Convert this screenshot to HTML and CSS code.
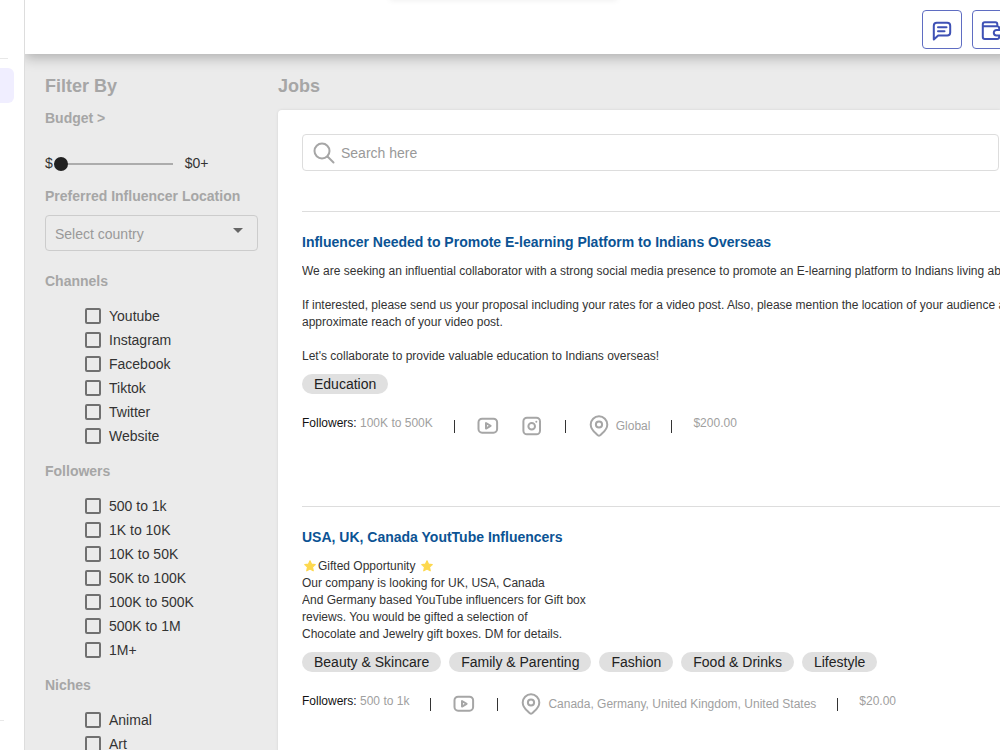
FILE: index.html
```html
<!DOCTYPE html>
<html lang="en">
<head>
    <meta charset="UTF-8">
    <meta name="viewport" content="width=device-width, initial-scale=1.0">
    <title>Jobs</title>
    <link rel="stylesheet" href="styles.css">
</head>
<body>
    <svg class="sprite" aria-hidden="true">
        <symbol id="icon-youtube" viewBox="0 0 24 24">
            <rect x="2.500" y="4.700" width="18.600" height="14" rx="3.600"/>
            <path d="M10 9v5.600l4.600-2.800z"/>
        </symbol>
        <symbol id="icon-instagram" viewBox="0 0 24 24">
            <rect x="3.400" y="3.700" width="16.600" height="16.600" rx="3.600"/>
            <circle cx="11.700" cy="12.200" r="3.300"/>
            <circle class="dot" cx="16.300" cy="7.700" r="1"/>
        </symbol>
        <symbol id="icon-pin" viewBox="0 0 24 24">
            <path d="M12 21.700c-1 0-1.700-.9-3-2.100C6.300 17.300 3.700 14.300 3.700 10.600a8.300 8.300 0 0 1 16.600 0c0 3.700-2.600 6.700-5.300 9-1.300 1.200-2 2.100-3 2.100z"/>
            <circle cx="12" cy="10.500" r="3.100"/>
        </symbol>
        <symbol id="icon-star" viewBox="0 0 24 24">
            <path d="M12 3l2.700 5.800 6.300.8-4.700 4.300 1.300 6.300-5.600-3.100-5.600 3.100 1.300-6.300L3 9.600l6.300-.8z"/>
        </symbol>
    </svg>

    <aside class="menu">
        <hr class="menu-line">
        <a class="menu-item active" href="#" aria-label="Jobs"></a>
        <hr class="menu-line short">
    </aside>

    <div class="page">
        <header class="topbar">
            <button class="icon-btn" aria-label="Messages">
                <svg viewBox="0 0 24 24">
                    <path d="M3.800 20.500V6.800a3 3 0 0 1 3-3h10.400a3 3 0 0 1 3 3v6.600a3 3 0 0 1-3 3H8.200z"/>
                    <path d="M8 8.200h8.500M8 12.200h6.500"/>
                </svg>
            </button>
            <button class="icon-btn" aria-label="Wallet">
                <svg viewBox="0 0 24 24">
                    <path d="M2.800 7.200V18a2 2 0 0 0 2 2h12.400a2 2 0 0 0 2-2v-1.500M2.800 7.200V5.300a2 2 0 0 1 2-2h10.500a2 2 0 0 1 2 2v1.900M2.800 7.200h14.400a2 2 0 0 1 2 2v1.500M22 11h-5.500a2.700 2.700 0 0 0 0 5.400H22z"/>
                </svg>
            </button>
        </header>

        <div class="content">
            <form class="filters">
                <h2>Filter By</h2>
                <h3><label for="budget">Budget &gt;</label></h3>
                <div class="budget">
                    <span>$</span>
                    <input type="range" id="budget" min="0" max="1000" value="0">
                    <output for="budget">$0+</output>
                </div>

                <h3><label for="country">Preferred Influencer Location</label></h3>
                <div class="select-box">
                    <select id="country">
                        <option>Select country</option>
                        <option>Canada</option>
                        <option>Germany</option>
                        <option>United Kingdom</option>
                        <option>United States</option>
                    </select>
                </div>

                <h3>Channels</h3>
                <div class="checks">
                    <label><input type="checkbox">Youtube</label>
                    <label><input type="checkbox">Instagram</label>
                    <label><input type="checkbox">Facebook</label>
                    <label><input type="checkbox">Tiktok</label>
                    <label><input type="checkbox">Twitter</label>
                    <label><input type="checkbox">Website</label>
                </div>

                <h3>Followers</h3>
                <div class="checks">
                    <label><input type="checkbox">500 to 1k</label>
                    <label><input type="checkbox">1K to 10K</label>
                    <label><input type="checkbox">10K to 50K</label>
                    <label><input type="checkbox">50K to 100K</label>
                    <label><input type="checkbox">100K to 500K</label>
                    <label><input type="checkbox">500K to 1M</label>
                    <label><input type="checkbox">1M+</label>
                </div>

                <h3>Niches</h3>
                <div class="checks">
                    <label><input type="checkbox">Animal</label>
                    <label><input type="checkbox">Art</label>
                </div>
            </form>

            <main class="jobs">
                <h2>Jobs</h2>
                <div class="panel">
                    <div class="search">
                        <svg viewBox="0 0 24 24"><circle cx="10" cy="10" r="7.500"/><path d="M15.500 15.500l6 6"/></svg>
                        <input type="text" placeholder="Search here" aria-label="Search jobs">
                    </div>

                    <article class="job">
                        <h4><a href="#">Influencer Needed to Promote E-learning Platform to Indians Overseas</a></h4>
                        <p>We are seeking an influential collaborator with a strong social media presence to promote an E-learning platform to Indians living abroad.<br>
                            <br>
                            If interested, please send us your proposal including your rates for a video post. Also, please mention the location of your audience and<br>
                            approximate reach of your video post.<br>
                            <br>
                            Let's collaborate to provide valuable education to Indians overseas!</p>
                        <div class="tags"><span>Education</span></div>
                        <div class="meta">
                            <div class="followers"><b>Followers:</b> 100K to 500K</div>
                            <i class="bar"></i>
                            <div class="channels">
                                <svg><use href="#icon-youtube"/></svg>
                                <svg><use href="#icon-instagram"/></svg>
                            </div>
                            <i class="bar"></i>
                            <div class="place"><svg><use href="#icon-pin"/></svg>Global</div>
                            <i class="bar"></i>
                            <div class="price">$200.00</div>
                        </div>
                    </article>

                    <article class="job">
                        <h4><a href="#">USA, UK, Canada YoutTube Influencers</a></h4>
                        <p><svg class="star"><use href="#icon-star"/></svg>Gifted Opportunity <svg class="star"><use href="#icon-star"/></svg><br>
                            Our company is looking for UK, USA, Canada<br>
                            And Germany based YouTube influencers for Gift box<br>
                            reviews. You would be gifted a selection of<br>
                            Chocolate and Jewelry gift boxes. DM for details.</p>
                        <div class="tags">
                            <span>Beauty &amp; Skincare</span>
                            <span>Family &amp; Parenting</span>
                            <span>Fashion</span>
                            <span>Food &amp; Drinks</span>
                            <span>Lifestyle</span>
                        </div>
                        <div class="meta">
                            <div class="followers"><b>Followers:</b> 500 to 1k</div>
                            <i class="bar"></i>
                            <div class="channels">
                                <svg><use href="#icon-youtube"/></svg>
                            </div>
                            <i class="bar"></i>
                            <div class="place"><svg><use href="#icon-pin"/></svg>Canada, Germany, United Kingdom, United States</div>
                            <i class="bar"></i>
                            <div class="price">$20.00</div>
                        </div>
                    </article>
                </div>
            </main>
        </div>
    </div>
</body>
</html>
```
FILE: styles.css
```css
* {
    box-sizing: border-box;
}

body {
    margin: 0;
    height: 100vh;
    display: flex;
    overflow: hidden;
    font-family: "Liberation Sans", Arial, sans-serif;
    font-size: 14px;
    color: #333;
    background-color: #fff;
}

h2, h3, h4, p {
    margin: 0;
}

h2 {
    font-size: 18px;
    line-height: 24px;
    color: #a6a6a6;
}

h3 {
    font-size: 14px;
    line-height: 20px;
    color: #a6a6a6;
}

svg {
    fill: none;
    stroke: #a6a6a6;
    stroke-width: 2;
    stroke-linejoin: round;
    stroke-linecap: round;
}

.sprite {
    display: none;
}

/* left menu */
.menu {
    flex: 0 0 25px;
    display: flex;
    flex-direction: column;
    align-items: flex-start;
    padding: 58px 0 29px;
    border-right: 1px solid #ddd;
}

.menu-line {
    width: 8px;
    margin: 0;
    border: 0;
    border-top: 1px solid #e8e8e8;
}

.menu-line.short {
    width: 4px;
    margin-top: auto;
}

.menu-item {
    width: 14px;
    height: 35px;
    margin-top: 9px;
    border-radius: 0 6px 6px 0;
}

.menu-item.active {
    background-color: #f0eeff;
}

.page {
    flex: 1;
    min-width: 0;
    display: flex;
    flex-direction: column;
    background-color: #ebebeb;
}

/* top bar */
.topbar {
    position: relative;
    z-index: 1;
    flex: none;
    display: flex;
    justify-content: flex-end;
    gap: 10px;
    height: 54px;
    margin-right: -12px;
    padding-top: 10px;
    background-color: #fff;
    box-shadow: 0 4px 12px rgba(0, 0, 0, 0.25);
    clip-path: inset(0 0 -20px 0);
}

/* soft edge under the top of the window */
.topbar::before {
    content: "";
    position: absolute;
    top: -10px;
    left: 37%;
    right: 40%;
    height: 10px;
    box-shadow: 0 0 6px rgba(0, 0, 0, 0.08);
}

.icon-btn {
    width: 40px;
    height: 39px;
    padding: 2px 1px 0 0;
    display: flex;
    align-items: center;
    justify-content: center;
    border: 1px solid #5f6dc2;
    border-radius: 4px;
    background-color: #fff;
    cursor: pointer;
}

.icon-btn svg {
    width: 24px;
    height: 24px;
    stroke: #3f51b5;
}

.content {
    flex: 1;
    min-height: 0;
    display: flex;
    gap: 20px;
    padding: 20px 0 0 20px;
    overflow: hidden auto;
    scrollbar-width: none;
}

/* filters */
.filters {
    flex: 0 0 213px;
}

.filters h3 {
    margin: 10px 0 13px;
}

.budget {
    display: flex;
    align-items: center;
    height: 20px;
    margin: 25px 0 13px;
}

.budget input {
    flex: 0 0 119px;
    min-width: 0;
    height: 14px;
    margin: 2px 12px 0 1px;
    background: none;
    appearance: none;
}

.budget input::-webkit-slider-runnable-track {
    height: 2px;
    background-color: #acacac;
}

.budget input::-webkit-slider-thumb {
    width: 14px;
    height: 14px;
    margin-top: -6px;
    border-radius: 50%;
    background-color: #212121;
    appearance: none;
}

.select-box {
    position: relative;
    margin: -4px 0 20px;
}

.select-box::after {
    content: "";
    position: absolute;
    top: 13px;
    right: 15px;
    border: 5px solid transparent;
    border-top-color: #666;
    border-bottom: 0;
    pointer-events: none;
}

.select-box select {
    display: block;
    width: 100%;
    height: 36px;
    padding: 2px 9px 0;
    border: 1px solid #ccc;
    border-radius: 4px;
    background: none;
    font: inherit;
    color: #999;
    appearance: none;
}

.checks {
    margin: 0 0 13px 40px;
}

.checks label {
    display: flex;
    align-items: center;
    height: 24px;
    gap: 8px;
}

.checks input {
    width: 16px;
    height: 16px;
    margin: 0;
    border: 2px solid #707070;
    border-radius: 2px;
    appearance: none;
}

.checks input:checked {
    background-color: #707070;
}

/* jobs */
.jobs {
    flex: 1;
    min-width: 0;
    display: flex;
    flex-direction: column;
}

.panel {
    flex: 1 0 auto;
    margin-top: 12px;
    padding: 24px 0 0 24px;
    border-radius: 4px 0 0 0;
    background-color: #fff;
    box-shadow: 0 0 3px rgba(0, 0, 0, 0.1);
}

.search {
    display: flex;
    align-items: center;
    height: 37px;
    margin: 0 1px 40px 0;
    padding-left: 9px;
    border: 1px solid #ddd;
    border-radius: 4px;
}

.search svg {
    width: 24px;
    height: 24px;
}

.search input {
    flex: 1;
    margin-left: 5px;
    padding: 0;
    border: 0;
    outline: 0;
    background: none;
    font: inherit;
}

.search input::placeholder {
    color: #999;
}

.job {
    height: 295px;
    padding-top: 20px;
    border-top: 1px solid #ddd;
    white-space: nowrap;
}

.job h4 {
    margin-bottom: 11px;
    font-size: 14px;
    line-height: 20px;
}

.job h4 a {
    color: #0b5394;
    text-decoration: none;
}

.job p {
    overflow: hidden;
    font-size: 12px;
    line-height: 17px;
}

.star {
    width: 14px;
    height: 14px;
    margin: 0 1px;
    vertical-align: -3px;
    fill: #fdd84e;
    stroke: #fdd84e;
}

.tags {
    display: flex;
    gap: 8px;
    margin: 9px 0 20px;
}

.tags span {
    padding: 0 12px;
    border-radius: 10px;
    line-height: 20px;
    color: #222;
    background-color: #e0e0e0;
}

.meta {
    display: flex;
    align-items: center;
    font-size: 12px;
    line-height: 16px;
    color: #a0a0a0;
}

.meta svg {
    width: 24px;
    height: 24px;
}

.meta .dot,
.dot {
    fill: #a6a6a6;
    stroke: none;
}

.followers,
.price {
    padding-bottom: 6px;
}

.followers b {
    font-weight: normal;
    color: #111;
}

.bar {
    width: 1px;
    height: 13px;
    margin: 0 21px;
    background-color: #333;
}

.channels {
    display: flex;
    gap: 20px;
}

.place {
    display: flex;
    align-items: center;
    gap: 5px;
}
```
